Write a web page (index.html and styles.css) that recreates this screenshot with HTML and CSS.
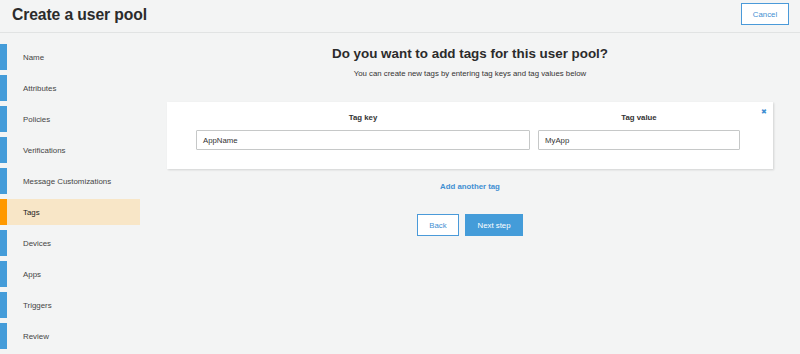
FILE: index.html
```html
<!DOCTYPE html>
<html>
<head>
<meta charset="utf-8">
<link rel="stylesheet" href="styles.css">
</head>
<body>
<header class="topbar">
  <h1 class="title">Create a user pool</h1>
  <button class="btn btn-outline cancel">Cancel</button>
</header>
<div class="layout">
  <nav class="sidebar">
    <div class="step"><span class="bar"></span><span class="label">Name</span></div>
    <div class="step"><span class="bar"></span><span class="label">Attributes</span></div>
    <div class="step"><span class="bar"></span><span class="label">Policies</span></div>
    <div class="step"><span class="bar"></span><span class="label">Verifications</span></div>
    <div class="step"><span class="bar"></span><span class="label">Message Customizations</span></div>
    <div class="step active"><span class="bar"></span><span class="label">Tags</span></div>
    <div class="step"><span class="bar"></span><span class="label">Devices</span></div>
    <div class="step"><span class="bar"></span><span class="label">Apps</span></div>
    <div class="step"><span class="bar"></span><span class="label">Triggers</span></div>
    <div class="step"><span class="bar"></span><span class="label">Review</span></div>
  </nav>
  <main class="content">
    <h2 class="heading">Do you want to add tags for this user pool?</h2>
    <p class="sub">You can create new tags by entering tag keys and tag values below</p>
    <section class="card">
      <span class="remove">&#x2716;</span>
      <div class="tag-grid">
        <div class="col-label">Tag key</div>
        <div class="col-label">Tag value</div>
        <div class="field">AppName</div>
        <div class="field">MyApp</div>
      </div>
    </section>
    <a class="add-link">Add another tag</a>
    <div class="actions">
      <button class="btn btn-outline back">Back</button>
      <button class="btn btn-primary next">Next step</button>
    </div>
  </main>
</div>
</body>
</html>
```
FILE: styles.css
```css
* { box-sizing: border-box; }
html, body {
  margin: 0;
  padding: 0;
  background: #f3f4f4;
  font-family: "Liberation Sans", Arial, sans-serif;
  color: #333;
}
.topbar {
  height: 33px;
  border-bottom: 1px solid #e1e3e3;
  display: flex;
  align-items: center;
  justify-content: space-between;
  padding: 0 11px 0 12px;
}
.title {
  margin: 0;
  font-size: 15.7px;
  font-weight: bold;
  color: #2b2b2b;
  letter-spacing: -0.1px;
  margin-top: -2px;
}
.btn {
  font-family: "Liberation Sans", Arial, sans-serif;
  font-size: 7.8px;
  height: 22px;
  padding: 0;
  cursor: pointer;
}
.btn-outline {
  background: #fff;
  border: 1px solid #4a9ad9;
  color: #3f8fd2;
}
.btn-primary {
  background: #449cd9;
  border: 1px solid #449cd9;
  color: #fff;
}
.cancel {
  width: 48px;
  height: 22px;
  margin-top: -4px;
}
.layout {
  display: flex;
}
.sidebar {
  width: 140px;
  padding-top: 11px;
  display: flex;
  flex-direction: column;
  gap: 5px;
}
.step {
  height: 26px;
  display: flex;
  align-items: center;
  font-size: 7.9px;
  color: #444;
}
.bar {
  width: 7px;
  height: 100%;
  background: #449cd9;
}
.label {
  padding-left: 16px;
  flex: 1;
  height: 100%;
  display: flex;
  align-items: center;
}
.step.active .bar { background: #ff9900; }
.step.active .label { background: #f8e6c7; color: #222; }
.content {
  flex: 1;
  display: flex;
  flex-direction: column;
  align-items: center;
  padding: 0 27px;
}
.heading {
  margin: 13px 0 0;
  font-size: 13.4px;
  font-weight: bold;
  color: #2b2b2b;
}
.sub {
  margin: 8px 0 0;
  font-size: 7.8px;
  color: #333;
}
.card {
  position: relative;
  align-self: stretch;
  margin-top: 24px;
  background: #fff;
  box-shadow: 1px 1px 2px rgba(0,0,0,0.14);
  height: 67px;
  padding: 11px 0 0 29px;
}
.remove {
  position: absolute;
  right: 6px;
  top: 6px;
  font-size: 7px;
  color: #3f8fd2;
}
.tag-grid {
  display: grid;
  grid-template-columns: 334px 202px;
  column-gap: 8px;
  row-gap: 7px;
}
.col-label {
  text-align: center;
  font-size: 7.8px;
  font-weight: bold;
  color: #333;
  line-height: 10px;
}
.field {
  height: 20px;
  border: 1px solid #c6c8c8;
  border-radius: 1px;
  font-size: 7.8px;
  display: flex;
  align-items: center;
  padding-left: 6px;
  color: #333;
}
.add-link {
  margin-top: 13px;
  font-size: 7.8px;
  font-weight: bold;
  color: #3f8fd2;
}
.actions {
  margin-top: 23px;
  display: flex;
  gap: 6px;
}
.back { width: 42px; }
.next { width: 58px; }
```
